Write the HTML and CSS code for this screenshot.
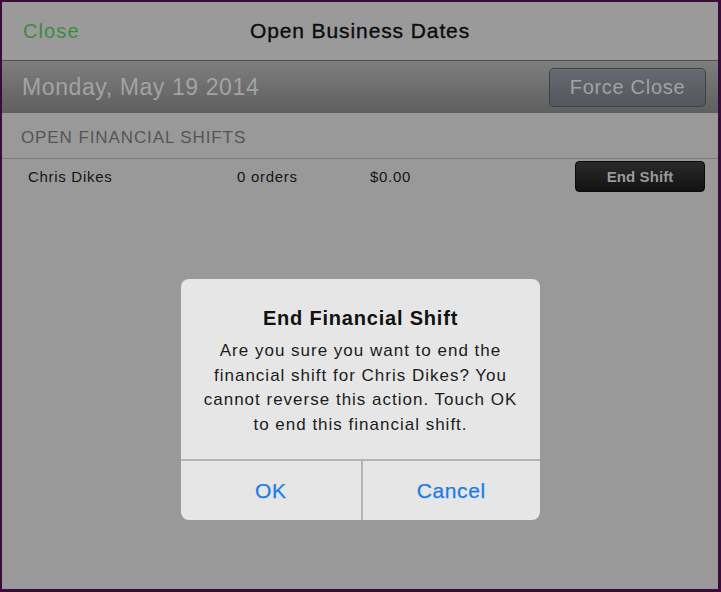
FILE: index.html
```html
<!DOCTYPE html>
<html>
<head>
<meta charset="utf-8">
<link rel="stylesheet" href="styles.css">
</head>
<body>
<div class="frame">
  <div class="screen">
    <header class="navbar">
      <span class="nav-close">Close</span>
      <span class="nav-title">Open Business Dates</span>
    </header>
    <div class="datebar">
      <span class="date">Monday, May 19 2014</span>
      <span class="force-btn">Force Close</span>
    </div>
    <div class="section-head">OPEN FINANCIAL SHIFTS</div>
    <div class="shift-row">
      <span class="col-name">Chris Dikes</span>
      <span class="col-orders">0 orders</span>
      <span class="col-amount">$0.00</span>
      <span class="end-btn">End Shift</span>
    </div>
    <div class="alert">
      <div class="alert-body">
        <div class="alert-title">End Financial Shift</div>
        <div class="alert-msg">Are you sure you want to end the financial shift for Chris Dikes? You cannot reverse this action. Touch OK to end this financial shift.</div>
      </div>
      <div class="alert-actions">
        <span class="alert-btn">OK</span>
        <span class="alert-btn">Cancel</span>
      </div>
    </div>
  </div>
</div>
</body>
</html>
```

FILE: styles.css
```css
html, body {
  margin: 0;
  padding: 0;
  background: #3a0b3a;
}
.frame {
  width: 721px;
  height: 592px;
  box-sizing: border-box;
  border-style: solid;
  border-color: #3a0b3a;
  border-width: 2px 3px 3px 2px;
  font-family: "Liberation Sans", Arial, sans-serif;
}
.screen {
  position: relative;
  width: 100%;
  height: 100%;
  background: #999999;
  overflow: hidden;
}
.navbar {
  height: 58px;
  border-bottom: 1px solid #4e4e4e;
  display: flex;
  align-items: center;
  position: relative;
  padding-left: 21px;
  background: #9a9a9a;
}
.nav-close {
  font-size: 20px;
  letter-spacing: 1.1px;
  color: #3d8a3d;
}
.nav-title {
  position: absolute;
  left: 0;
  right: 0;
  text-align: center;
  font-size: 21px;
  letter-spacing: 0.9px;
  -webkit-text-stroke: 0.35px #0c0c0c;
  color: #0c0c0c;
  pointer-events: none;
}
.datebar {
  height: 52px;
  background: linear-gradient(#7e7e7e, #5f5f5f);
  display: flex;
  align-items: center;
  justify-content: space-between;
  padding: 0 12px 0 20px;
}
.date {
  font-size: 23px;
  letter-spacing: 0.6px;
  color: #a3a3a3;
}
.force-btn {
  width: 157px;
  height: 39px;
  box-sizing: border-box;
  border: 1px solid #3e4044;
  border-radius: 5px;
  background: linear-gradient(#666a70, #54585e);
  box-shadow: inset 0 1px 0 rgba(255,255,255,0.08);
  color: #a2a2a2;
  font-size: 20px;
  letter-spacing: 0.7px;
  display: flex;
  align-items: center;
  justify-content: center;
}
.section-head {
  box-sizing: border-box;
  height: 46px;
  border-bottom: 1px solid #7a7a7a;
  padding: 5px 0 0 19px;
  display: flex;
  align-items: center;
  font-size: 17px;
  letter-spacing: 0.9px;
  color: #555555;
}
.shift-row {
  height: 36px;
  position: relative;
  font-size: 15px;
  letter-spacing: 0.7px;
  color: #151515;
}
.col-name { position: absolute; left: 26px; top: 9px; }
.col-orders { position: absolute; left: 235px; top: 9px; }
.col-amount { position: absolute; left: 368px; top: 9px; }
.end-btn {
  position: absolute;
  left: 573px;
  top: 2px;
  width: 130px;
  height: 31px;
  box-sizing: border-box;
  border-radius: 4px;
  background: linear-gradient(#2a2a2a, #121212);
  border: 1px solid #0a0a0a;
  color: #9a9a9a;
  font-weight: bold;
  font-size: 15px;
  letter-spacing: 0.1px;
  display: flex;
  align-items: center;
  justify-content: center;
}
.alert {
  position: absolute;
  left: 179px;
  top: 277px;
  width: 359px;
  height: 241px;
  border-radius: 8px;
  background: #e6e6e6;
  overflow: hidden;
  display: flex;
  flex-direction: column;
}
.alert-body {
  flex: 1;
  text-align: center;
  padding: 27px 14px 0;
}
.alert-title {
  font-size: 20px;
  font-weight: bold;
  letter-spacing: 0.8px;
  color: #111;
  line-height: 24px;
}
.alert-msg {
  margin-top: 9px;
  font-size: 17px;
  letter-spacing: 1px;
  line-height: 24.7px;
  color: #1c1c1c;
}
.alert-actions {
  height: 59px;
  border-top: 2px solid #b4b4b4;
  display: grid;
  grid-template-columns: 1fr 1fr;
}
.alert-btn {
  display: flex;
  align-items: center;
  justify-content: center;
  font-size: 21px;
  letter-spacing: 0.6px;
  -webkit-text-stroke: 0.25px #1a7ce8;
  color: #1a7ce8;
}
.alert-btn + .alert-btn {
  border-left: 2px solid #b4b4b4;
}
```
